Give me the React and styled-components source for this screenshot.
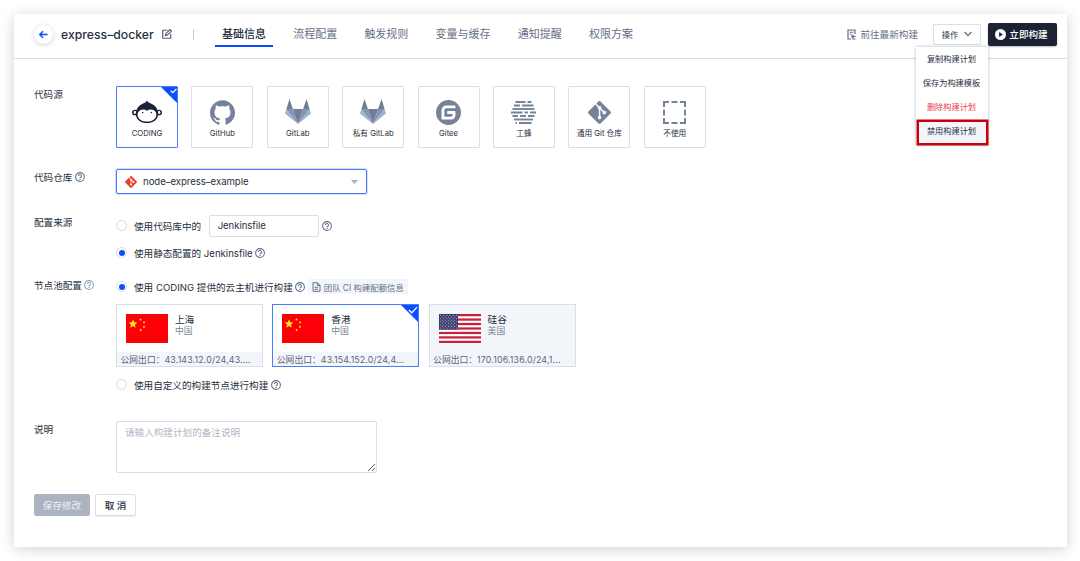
import React from 'react';
import styled, { createGlobalStyle, css } from 'styled-components';
import { SiGithub, SiGit, SiGitee } from 'react-icons/si';

const GlobalStyle = createGlobalStyle`
* {
    box-sizing: border-box;
}
body {
    margin: 0;
    background: #fff;
    color: #272f3e;
    font-family: Inter, 'Noto Sans CJK SC', sans-serif;
    font-size: 9.6px;
}
button, input, textarea {
    font-family: inherit;
    color: inherit;
}
svg {
    display: block;
    flex: none;
}
`;

const Screen = styled.div`
    height: 561px;
    padding: 14px 14px 0;
    overflow: hidden;
`;

const Page = styled.div`
    width: 1053px;
    height: 533px;
    background: #fff;
    box-shadow: 0 2px 13px rgba(0, 0, 0, 0.18);
`;

/* ---------- header ---------- */

const Header = styled.header`
    display: flex;
    align-items: center;
    height: 45px;
    padding: 0 10px 4px 20px;
    border-bottom: 1px solid #dadce3;
`;

const BackButton = styled.button`
    display: flex;
    align-items: center;
    justify-content: center;
    width: 19px;
    height: 19px;
    padding: 0;
    border: 0;
    border-radius: 50%;
    background: #fff;
    box-shadow: 0 1px 4px rgba(32, 45, 64, 0.22);
`;

const Title = styled.h1`
    margin: 1px 7px 0 8px;
    width: 94px;
    font-size: 12.2px;
    font-weight: 550;
    line-height: 18px;
    letter-spacing: 0.02px;
    white-space: nowrap;
`;

const Divider = styled.i`
    width: 1px;
    height: 11px;
    margin: 0 21px 0 21px;
    background: #c5cad4;
`;

const Tabs = styled.nav`
    display: flex;
    gap: 13px;
    flex: 1;
`;

const Tab = styled.a`
    height: 26px;
    padding: 0 7px;
    margin-right: 0.2px;
    font-size: 11px;
    line-height: 26px;
    color: #667085;
    white-space: nowrap;
    ${({ $active }) => $active && css`
        color: #202d40;
        font-weight: 500;
        border-bottom: 2px solid #0d4fff;
    `}
`;

const LatestLink = styled.a`
    display: flex;
    align-items: center;
    gap: 4px;
    margin-right: 15px;
    color: #667085;
    white-space: nowrap;
`;

const ActionWrap = styled.div`
    position: relative;
`;

const ActionButton = styled.button`
    display: flex;
    align-items: center;
    justify-content: center;
    gap: 6px;
    width: 48px;
    height: 21px;
    margin-right: 7px;
    padding: 0;
    border: 1px solid #dadfe6;
    border-radius: 1px;
    background: #fff;
    font-size: 8.2px;
    white-space: nowrap;
`;

const BuildButton = styled.button`
    display: flex;
    align-items: center;
    justify-content: center;
    gap: 3px;
    width: 69px;
    height: 23px;
    padding: 0 2px 0 0;
    border: 0;
    border-radius: 2px;
    background: #1a2233;
    box-shadow: 0 1px 2px rgba(32, 45, 64, 0.3);
    color: #fff;
    font-size: 9.6px;
    font-weight: 500;
    white-space: nowrap;
`;

const Menu = styled.ul`
    position: absolute;
    top: 23px;
    right: 0;
    width: 72px;
    margin: 0;
    padding: 0;
    list-style: none;
    background: #fff;
    box-shadow: 0 0 3px rgba(32, 45, 64, 0.35);
    z-index: 2;
`;

const MenuItem = styled.li`
    height: 24px;
    padding-right: 1px;
    line-height: 24px;
    font-size: 8.2px;
    text-align: center;
    white-space: nowrap;
    color: ${({ $danger }) => ($danger ? '#ee3b4b' : '#272f3e')};
    ${({ $marked }) => $marked && css`
        height: 25px;
        margin: 1px 0 0 1px;
        padding-right: 2px;
        line-height: 18px;
        background: #f2f5fa;
        border: 2.5px solid #c7000b;
        box-shadow: 0 0 0 0.5px #c7000b;
    `}
`;

/* ---------- form ---------- */

const Form = styled.form`
    padding: 27px 20px 0;
`;

const Row = styled.section`
    display: grid;
    grid-template-columns: 82px 1fr;
    margin-bottom: ${({ $gap }) => $gap}px;
`;

const Label = styled.div`
    display: flex;
    align-items: center;
    gap: 2.5px;
    height: 15px;
    margin-top: ${({ $top = 0 }) => $top}px;
    white-space: nowrap;
`;

const Sources = styled.div`
    display: flex;
    gap: 13.4px;
`;

const Source = styled.div`
    position: relative;
    display: flex;
    flex-direction: column;
    align-items: center;
    width: 62px;
    height: 62px;
    padding-top: 10px;
    border: 1px solid ${({ $active }) => ($active ? '#4a7cfa' : '#dadfe6')};
    border-radius: 1px;
    font-size: 7.7px;
    line-height: 14px;
    white-space: nowrap;
    color: #272f3e;
`;

const SourceIcon = styled.div`
    display: flex;
    align-items: center;
    justify-content: center;
    height: 30px;
    color: #75839a;
`;

const Corner = styled.span`
    position: absolute;
    top: 0;
    right: 0;
`;

const Select = styled.div`
    display: flex;
    align-items: center;
    width: 251px;
    height: 25px;
    padding: 0 8px;
    border: 1px solid #4a7cfa;
    border-radius: 2px;
    box-shadow: 0 0 0 1px #d3dffb;
    color: #272f3e;
    span {
        flex: 1;
        margin-left: 6px;
        letter-spacing: -0.04px;
    }
`;

const Stack = styled.div`
    display: flex;
    flex-direction: column;
    gap: ${({ $gap }) => $gap}px;
`;

const Line = styled.div`
    display: flex;
    align-items: center;
    height: ${({ $height = 15 }) => $height}px;
    white-space: nowrap;
`;

const Radio = styled.i`
    display: flex;
    align-items: center;
    justify-content: center;
    width: 11px;
    height: 11px;
    margin-right: 7px;
    border: 1px solid #d5dae3;
    border-radius: 50%;
    &::after {
        content: '';
        width: 6px;
        height: 6px;
        border-radius: 50%;
        background: ${({ $checked }) => ($checked ? '#0d4fff' : 'transparent')};
    }
`;

const Input = styled.input`
    width: 110px;
    height: 22px;
    margin: 0 2.5px 0 8px;
    padding: 0 7.5px;
    border: 1px solid #dadfe6;
    border-radius: 2px;
    font-size: 9.6px;
    letter-spacing: -0.06px;
    outline: none;
`;

const HelpGap = styled.span`
    margin-left: 2.5px;
`;

const Quota = styled.a`
    display: flex;
    align-items: center;
    gap: 2.5px;
    height: 15px;
    margin-left: 3px;
    padding: 1px 4px 0;
    background: #f2f5fa;
    color: #667085;
    font-size: 8.4px;
`;

const Regions = styled.div`
    display: flex;
    gap: 9.3px;
`;

const Region = styled.div`
    position: relative;
    display: flex;
    flex-direction: column;
    justify-content: space-between;
    width: 147px;
    height: 63px;
    border: 1px solid ${({ $active }) => ($active ? '#4a7cfa' : '#dadfe6')};
    background: ${({ $muted }) => ($muted ? '#f2f5fa' : '#fff')};
`;

const RegionTop = styled.div`
    display: flex;
    gap: 7px;
    padding: 9px 0 0 9px;
`;

const RegionName = styled.div`
    font-size: 9.6px;
    line-height: 11px;
    small {
        display: block;
        font-size: 8.8px;
        line-height: 11px;
        color: #7a8599;
    }
`;

const Egress = styled.div`
    height: 14px;
    padding: 0 3.5px;
    line-height: 15px;
    font-size: 8.8px;
    white-space: nowrap;
    background: #f2f5fa;
    color: #5c6578;
    span {
        letter-spacing: 0.15px;
    }
`;

const TextArea = styled.textarea`
    width: 261px;
    height: 52px;
    padding: 4px 8px;
    border: 1px solid #dadfe6;
    border-radius: 2px;
    font-size: 9.6px;
    line-height: 14px;
    outline: none;
    &::placeholder {
        color: #b0b8c7;
    }
`;

const Buttons = styled.div`
    display: flex;
    gap: 5px;
`;

const Button = styled.button`
    width: ${({ $width }) => $width}px;
    height: 22px;
    padding: 0 0 1px;
    border-radius: 2px;
    font-size: 9.6px;
    white-space: nowrap;
    border: 1px solid ${({ $disabled }) => ($disabled ? '#acb4c2' : '#dadfe6')};
    background: ${({ $disabled }) => ($disabled ? '#acb4c2' : '#fff')};
    color: ${({ $disabled }) => ($disabled ? '#eceff4' : '#202d40')};
    font-weight: ${({ $disabled }) => ($disabled ? 400 : 500)};
    box-shadow: ${({ $disabled }) => ($disabled ? 'none' : '0 1px 1px rgba(32, 45, 64, 0.1)')};
`;

/* ---------- icons ---------- */

const Help = ({ color = '#5f6d85' }) => (
    <svg width="10" height="10" viewBox="0 0 20 20" fill="none" stroke={color} strokeWidth="2.1">
        <circle cx="10" cy="10" r="8.8" />
        <path d="M7 8a3 3 0 1 1 4.6 2.5c-1 .6-1.6 1.1-1.6 2.2" />
        <circle cx="10" cy="14.8" r=".5" />
    </svg>
);

const ArrowLeft = () => (
    <svg width="9" height="9" viewBox="0 0 9 9" fill="none" stroke="#0d4fff" strokeWidth="1.5">
        <path d="M8.6 4.5H1.2M4 1.3L.9 4.5L4 7.7" />
    </svg>
);

const Edit = () => (
    <svg width="10" height="10" viewBox="0 0 20 20" fill="none" stroke="#566176" strokeWidth="2.4">
        <path d="M11 2.5H1.5V18.5H17.5V10" />
        <path d="M7 13l.6-3.6L15.8 1.2L18.8 4.2L10.6 12.4z" />
    </svg>
);

const Latest = () => (
    <svg width="9" height="11" viewBox="0 0 18 22" fill="none" stroke="#5f6d85" strokeWidth="2.3">
        <path d="M16 10V2H2V20H8" />
        <path d="M5.5 6.5H12.5M5.5 10.5H9" />
        <path d="M17.5 15H10M13 11.5L9.5 15L13 18.5M11 20H17" />
    </svg>
);

const ChevronDown = () => (
    <svg width="8" height="6" viewBox="0 0 8 6" fill="none" stroke="#5c6b82" strokeWidth="1.2">
        <path d="M.6 1L4 4.6L7.4 1" />
    </svg>
);

const Play = () => (
    <svg width="11" height="11" viewBox="0 0 11 11">
        <circle cx="5.5" cy="5.5" r="5.5" fill="#fff" />
        <path d="M4.1 3L7.9 5.5L4.1 8z" fill="#1a2233" />
    </svg>
);

const Doc = () => (
    <svg width="9" height="10" viewBox="0 0 18 20" fill="none" stroke="#667085" strokeWidth="2">
        <path d="M2 1.5H11L16 6.5V18.5H2z" />
        <path d="M10.5 2V7H16M5 10.5H12M5 14.5H12" />
    </svg>
);

const Check = ({ size }) => (
    <Corner>
        <svg width={size} height={size} viewBox="0 0 16 16">
            <path d="M0 0H16V16z" fill="#0d4fff" />
            {size > 16
                ? <path d="M7.4 4.6L10.2 7.4L15 2" fill="none" stroke="#fff" strokeWidth="1.3" />
                : <path d="M9.6 3.6L11.8 5.6L15.4 2" fill="none" stroke="#fff" strokeWidth="1.2" />}
        </svg>
    </Corner>
);

const Monkey = () => (
    <svg width="30" height="24" viewBox="0 0 31 24">
        <g fill="#fff" stroke="#1a2233" strokeWidth="1.5">
            <circle cx="3" cy="12.5" r="2.2" />
            <circle cx="28" cy="12.5" r="2.2" />
        </g>
        <path
            d="M15.500 0C16.200 1.800 17.800 2.400 20 3.400C23.500 5 26 7.500 26.600 11C27 12.500 27.100 13.500 27 15C26.200 20.300 21.800 23.300 15.500 23.300S4.800 20.300 4 15C3.900 13.500 4 12.500 4.400 11C5 7.500 7.500 5 11 3.400C13.200 2.400 14.800 1.800 15.500 0z"
            fill="#1a2233"
        />
        <path
            d="M15.500 10.800C13.500 9.300 10.500 9.100 8.500 10.200C6.300 11.400 5.500 13.400 5.900 15.500C6.700 19.700 10.400 21.900 15.500 21.900S24.300 19.700 25.100 15.500C25.500 13.400 24.700 11.400 22.500 10.200C20.500 9.100 17.500 9.300 15.500 10.800z"
            fill="#fff"
        />
        <circle cx="11" cy="12.600" r=".8" fill="#1a2233" />
        <circle cx="20" cy="12.600" r=".8" fill="#1a2233" />
    </svg>
);

const GitLab = () => (
    <svg width="26" height="26" viewBox="0 0 26 26">
        <path d="M4.5 0L7.9 10H1.4zM21.5 0L24.6 10H18.1z" fill="#6f7f96" />
        <path d="M1.4 10L0 14.6L13 25zM24.6 10L26 14.6L13 25z" fill="#a0b1d3" />
        <path d="M1.4 10H7.9L13 25zM24.6 10H18.1L13 25z" fill="#8496b6" />
        <path d="M7.9 10H18.1L13 25z" fill="#6f7f96" />
    </svg>
);

const Bee = () => (
    <svg width="25" height="23" viewBox="0 0 25 23" stroke="#75839a" strokeWidth="1.9">
        <path d="M4.5 1H14.5M16.5 1H20.5" />
        <path d="M3 4.5H9M11 4.5H22.5" />
        <path d="M1.5 8H23.5" />
        <path d="M0 11.5H11.5M13.5 11.5H17M19 11.5H25" />
        <path d="M1.5 15H7M9 15H15M17 15H23.5" />
        <path d="M3 18.5H22" />
        <path d="M4.5 22H6M8 22H20.5" />
    </svg>
);

const EmptyBox = () => (
    <svg width="23" height="23" viewBox="0 0 23 23" fill="none" stroke="#75839a" strokeWidth="2">
        <path d="M1 6V1H6M8.5 1H14.5M17 1H22V6M22 8.5V14.5M22 17V22H17M14.5 22H8.5M6 22H1V17M1 14.5V8.5" />
    </svg>
);

const star = (x, y, r) =>
    Array.from({ length: 10 }, (_, i) => {
        const a = (Math.PI / 5) * i - Math.PI / 2;
        const d = i % 2 ? r * 0.45 : r;
        return `${x + d * Math.cos(a)},${y + d * Math.sin(a)}`;
    }).join(' ');

const ChinaFlag = () => (
    <svg width="42" height="29" viewBox="0 0 42 29">
        <rect width="42" height="29" fill="#fb0006" />
        <g fill="#ffee1a">
            <polygon points={star(7, 10, 4.6)} />
            <polygon points={star(14.5, 5.5, 1.5)} />
            <polygon points={star(18, 8.4, 1.5)} />
            <polygon points={star(18, 12.7, 1.5)} />
            <polygon points={star(14.7, 16, 1.5)} />
        </g>
    </svg>
);

const UsaFlag = () => (
    <svg width="42" height="29" viewBox="0 0 42 29">
        <rect width="42" height="29" fill="#fff" />
        {[0, 1, 2, 3, 4, 5, 6].map(i => (
            <rect key={i} y={i * 4.46} width="42" height="2.23" fill="#c8203c" />
        ))}
        <rect width="19" height="15.6" fill="#3d3b6e" />
        {Array.from({ length: 9 }, (_, row) =>
            Array.from({ length: row % 2 ? 5 : 6 }, (_, col) => (
                <circle
                    key={`${row}-${col}`}
                    cx={1.6 + col * 3.15 + (row % 2 ? 1.58 : 0)}
                    cy={1.5 + row * 1.57}
                    r=".5"
                    fill="#d5d6e6"
                />
            ))
        )}
    </svg>
);

/* ---------- data ---------- */

const tabs = ['基础信息', '流程配置', '触发规则', '变量与缓存', '通知提醒', '权限方案'];

const sources = [
    { name: 'CODING', icon: <Monkey />, active: true },
    { name: 'GitHub', icon: <SiGithub size={25} /> },
    { name: 'GitLab', icon: <GitLab /> },
    { name: '私有 GitLab', icon: <GitLab /> },
    { name: 'Gitee', icon: <SiGitee size={25} /> },
    { name: '工蜂', icon: <Bee /> },
    { name: '通用 Git 仓库', icon: <SiGit size={23} /> },
    { name: '不使用', icon: <EmptyBox /> },
];

const regions = [
    { city: '上海', country: '中国', ip: '43.143.12.0/24,43....', flag: <ChinaFlag /> },
    { city: '香港', country: '中国', ip: '43.154.152.0/24,4...', flag: <ChinaFlag />, active: true },
    { city: '硅谷', country: '美国', ip: '170.106.136.0/24,1...', flag: <UsaFlag />, muted: true },
];

const App = () => {
    return (
        <Screen>
            <GlobalStyle />
            <Page>
                <Header>
                    <BackButton type="button"><ArrowLeft /></BackButton>
                    <Title>express–docker</Title>
                    <Edit />
                    <Divider />
                    <Tabs>
                        {tabs.map((tab, i) => <Tab key={tab} $active={i === 0}>{tab}</Tab>)}
                    </Tabs>
                    <LatestLink><Latest />前往最新构建</LatestLink>
                    <ActionWrap>
                        <ActionButton type="button">操作<ChevronDown /></ActionButton>
                        <Menu>
                            <MenuItem>复制构建计划</MenuItem>
                            <MenuItem>保存为构建模板</MenuItem>
                            <MenuItem $danger>删除构建计划</MenuItem>
                            <MenuItem $marked>禁用构建计划</MenuItem>
                        </Menu>
                    </ActionWrap>
                    <BuildButton type="button"><Play />立即构建</BuildButton>
                </Header>
                <Form>
                    <Row $gap={21}>
                        <Label>代码源</Label>
                        <Sources>
                            {sources.map(({ name, icon, active }) => (
                                <Source key={name} $active={active}>
                                    <SourceIcon>{icon}</SourceIcon>
                                    {name}
                                    {active && <Check size={16} />}
                                </Source>
                            ))}
                        </Sources>
                    </Row>
                    <Row $gap={20}>
                        <Label>代码仓库<Help /></Label>
                        <Select>
                            <SiGit size={12} color="#e8402f" />
                            <span>node–express–example</span>
                            <svg width="7" height="4" viewBox="0 0 7 4"><path d="M0 0H7L3.5 4z" fill="#a9b1bf" /></svg>
                        </Select>
                    </Row>
                    <Row $gap={19}>
                        <Label>配置来源</Label>
                        <Stack $gap={8}>
                            <Line $height={23}>
                                <Radio />使用代码库中的
                                <Input defaultValue="Jenkinsfile" />
                                <Help />
                            </Line>
                            <Line>
                                <Radio $checked />使用静态配置的 Jenkinsfile
                                <HelpGap><Help /></HelpGap>
                            </Line>
                        </Stack>
                    </Row>
                    <Row $gap={29}>
                        <Label $top={-2}>节点池配置<Help color="#98a1b1" /></Label>
                        <Stack $gap={10}>
                            <Line>
                                <Radio $checked />使用 CODING 提供的云主机进行构建
                                <HelpGap><Help /></HelpGap>
                                <Quota><Doc />团队 CI 构建配额信息</Quota>
                            </Line>
                            <Regions>
                                {regions.map(({ city, country, ip, flag, active, muted }) => (
                                    <Region key={city} $active={active} $muted={muted}>
                                        <RegionTop>
                                            {flag}
                                            <RegionName>{city}<small>{country}</small></RegionName>
                                        </RegionTop>
                                        <Egress>公网出口：<span>{ip}</span></Egress>
                                        {active && <Check size={17} />}
                                    </Region>
                                ))}
                            </Regions>
                            <Line>
                                <Radio />使用自定义的构建节点进行构建
                                <HelpGap><Help /></HelpGap>
                            </Line>
                        </Stack>
                    </Row>
                    <Row $gap={21}>
                        <Label>说明</Label>
                        <TextArea placeholder="请输入构建计划的备注说明" />
                    </Row>
                    <Buttons>
                        <Button type="button" $width={56} $disabled>保存修改</Button>
                        <Button type="button" $width={41}>取 消</Button>
                    </Buttons>
                </Form>
            </Page>
        </Screen>
    );
};

export default App;
